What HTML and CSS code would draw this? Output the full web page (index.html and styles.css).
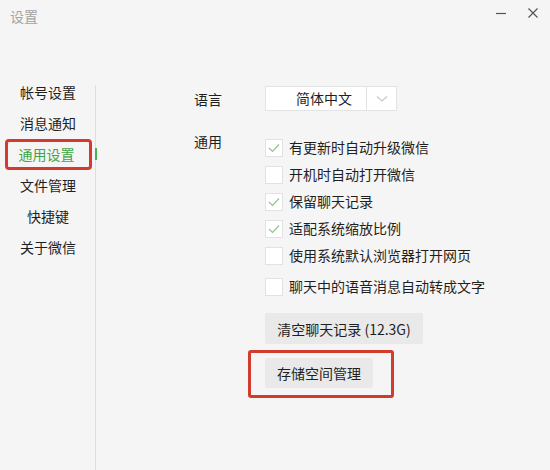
FILE: index.html
```html
<!DOCTYPE html>
<html lang="zh-CN">
<head>
<meta charset="utf-8">
<title>设置</title>
<link rel="stylesheet" href="styles.css">
</head>
<body>
<div class="window">
  <div class="titlebar">
    <span class="title">设置</span>
    <div class="controls">
      <svg class="ctl" width="12" height="12" viewBox="0 0 12 12"><line x1="1" y1="6.5" x2="11" y2="6.5" stroke="#555" stroke-width="1.2"/></svg>
      <svg class="ctl" width="12" height="12" viewBox="0 0 12 12"><path d="M1.5 1.5 L10.5 10.5 M10.5 1.5 L1.5 10.5" stroke="#555" stroke-width="1.2" fill="none"/></svg>
    </div>
  </div>
  <div class="main">
    <nav class="sidebar">
      <div class="nav-item">帐号设置</div>
      <div class="nav-item">消息通知</div>
      <div class="nav-item active">通用设置</div>
      <div class="nav-item">文件管理</div>
      <div class="nav-item">快捷键</div>
      <div class="nav-item">关于微信</div>
    </nav>
    <section class="content">
      <div class="row lang-row">
        <div class="label">语言</div>
        <div class="select">
          <span class="select-text">简体中文</span>
          <span class="select-arrow">
            <svg width="12" height="8" viewBox="0 0 12 8"><path d="M1 1.5 L6 6 L11 1.5" stroke="#c8c8c8" stroke-width="1.1" fill="none"/></svg>
          </span>
        </div>
      </div>
      <div class="row general-row">
        <div class="label general-label">通用</div>
        <div class="options">
          <div class="option"><span class="box checked"><svg width="14" height="12" viewBox="0 0 14 12"><path d="M2 6 L5.5 9.5 L12 2.5" stroke="#8cc78c" stroke-width="1.2" fill="none"/></svg></span><span>有更新时自动升级微信</span></div>
          <div class="option"><span class="box"></span><span>开机时自动打开微信</span></div>
          <div class="option"><span class="box checked"><svg width="14" height="12" viewBox="0 0 14 12"><path d="M2 6 L5.5 9.5 L12 2.5" stroke="#8cc78c" stroke-width="1.2" fill="none"/></svg></span><span>保留聊天记录</span></div>
          <div class="option"><span class="box checked"><svg width="14" height="12" viewBox="0 0 14 12"><path d="M2 6 L5.5 9.5 L12 2.5" stroke="#8cc78c" stroke-width="1.2" fill="none"/></svg></span><span>适配系统缩放比例</span></div>
          <div class="option"><span class="box"></span><span>使用系统默认浏览器打开网页</span></div>
          <div class="option option-last"><span class="box"></span><span>聊天中的语音消息自动转成文字</span></div>
          <button class="btn btn-clear">清空聊天记录 (12.3G)</button>
          <div class="highlight-box">
            <button class="btn">存储空间管理</button>
          </div>
        </div>
      </div>
    </section>
  </div>
</div>
</body>
</html>
```
FILE: styles.css
```css
* { box-sizing: border-box; }
html, body {
  margin: 0;
  padding: 0;
}
body {
  width: 550px;
  height: 470px;
  overflow: hidden;
  background: #f5f5f5;
  font-family: "Noto Sans CJK SC", "Microsoft YaHei", sans-serif;
  font-size: 14px;
  color: #1f1f1f;
}
.window {
  width: 550px;
  height: 470px;
  display: flex;
  flex-direction: column;
}
.titlebar {
  height: 77px;
  display: flex;
  justify-content: space-between;
  align-items: flex-start;
  padding: 6px 11px 0 10px;
}
.title {
  color: #a3a3a3;
  font-size: 14px;
  line-height: 20px;
}
.controls {
  display: flex;
  gap: 20px;
  padding-top: 1px;
}
.ctl { display: block; }
.main {
  flex: 1;
  display: flex;
}
.sidebar {
  width: 95px;
  display: flex;
  flex-direction: column;
}
.nav-item {
  height: 31px;
  line-height: 30px;
  text-align: center;
  padding-left: 1px;
  color: #1f1f1f;
}
.nav-item.active {
  position: relative;
  color: #3ea544;
  margin-left: 5px;
  margin-right: 3px;
  padding-left: 0;
  padding-right: 4px;
  line-height: 25px;
  border: 3px solid #d33b2f;
  border-radius: 4px;
}
.nav-item.active::after {
  content: "";
  position: absolute;
  right: -8px;
  top: 6px;
  width: 2px;
  height: 12px;
  background: #4bb04f;
}
.content {
  flex: 1;
  margin-top: 8px;
  border-left: 1px solid #dedede;
  padding: 1px 0 0 98px;
}
.row {
  display: flex;
}
.label {
  width: 71px;
  flex: none;
}
.lang-row .label {
  line-height: 25px;
  padding-top: 1px;
}
.select {
  width: 132px;
  height: 25px;
  background: #ffffff;
  border: 1px solid #e3e3e3;
  display: flex;
}
.select-text {
  flex: 1;
  line-height: 23px;
  padding-left: 30px;
}
.select-arrow {
  width: 30px;
  border-left: 1px solid #e3e3e3;
  display: flex;
  align-items: center;
  justify-content: center;
}
.select-arrow svg { display: block; }
.general-row {
  margin-top: 27px;
}
.general-label {
  line-height: 20px;
  margin-top: -8px;
}
.options {
  display: flex;
  flex-direction: column;
  align-items: flex-start;
}
.option {
  height: 27px;
  display: flex;
  align-items: flex-start;
  gap: 6px;
  line-height: 16px;
}
.option-last {
  margin-top: 4px;
}
.box {
  width: 18px;
  height: 18px;
  background: #ffffff;
  border: 1px solid #e2e2e2;
  display: flex;
  align-items: center;
  justify-content: center;
}
.box svg { display: block; }
.btn {
  font-family: inherit;
  font-size: 14px;
  color: #1f1f1f;
  background: #e9e9e9;
  border: none;
  border-radius: 2px;
  padding: 0 12px;
  height: 30px;
  line-height: 30px;
  cursor: pointer;
}
.btn-clear {
  margin-top: 8px;
  height: 31px;
  width: 158px;
}
.highlight-box {
  margin-top: 6px;
  margin-left: -17px;
  border: 3px solid #d33b2f;
  border-radius: 3px;
  padding: 5px 18px 7px 14px;
}
.highlight-box .btn {
  width: 108px;
  display: block;
}
```
